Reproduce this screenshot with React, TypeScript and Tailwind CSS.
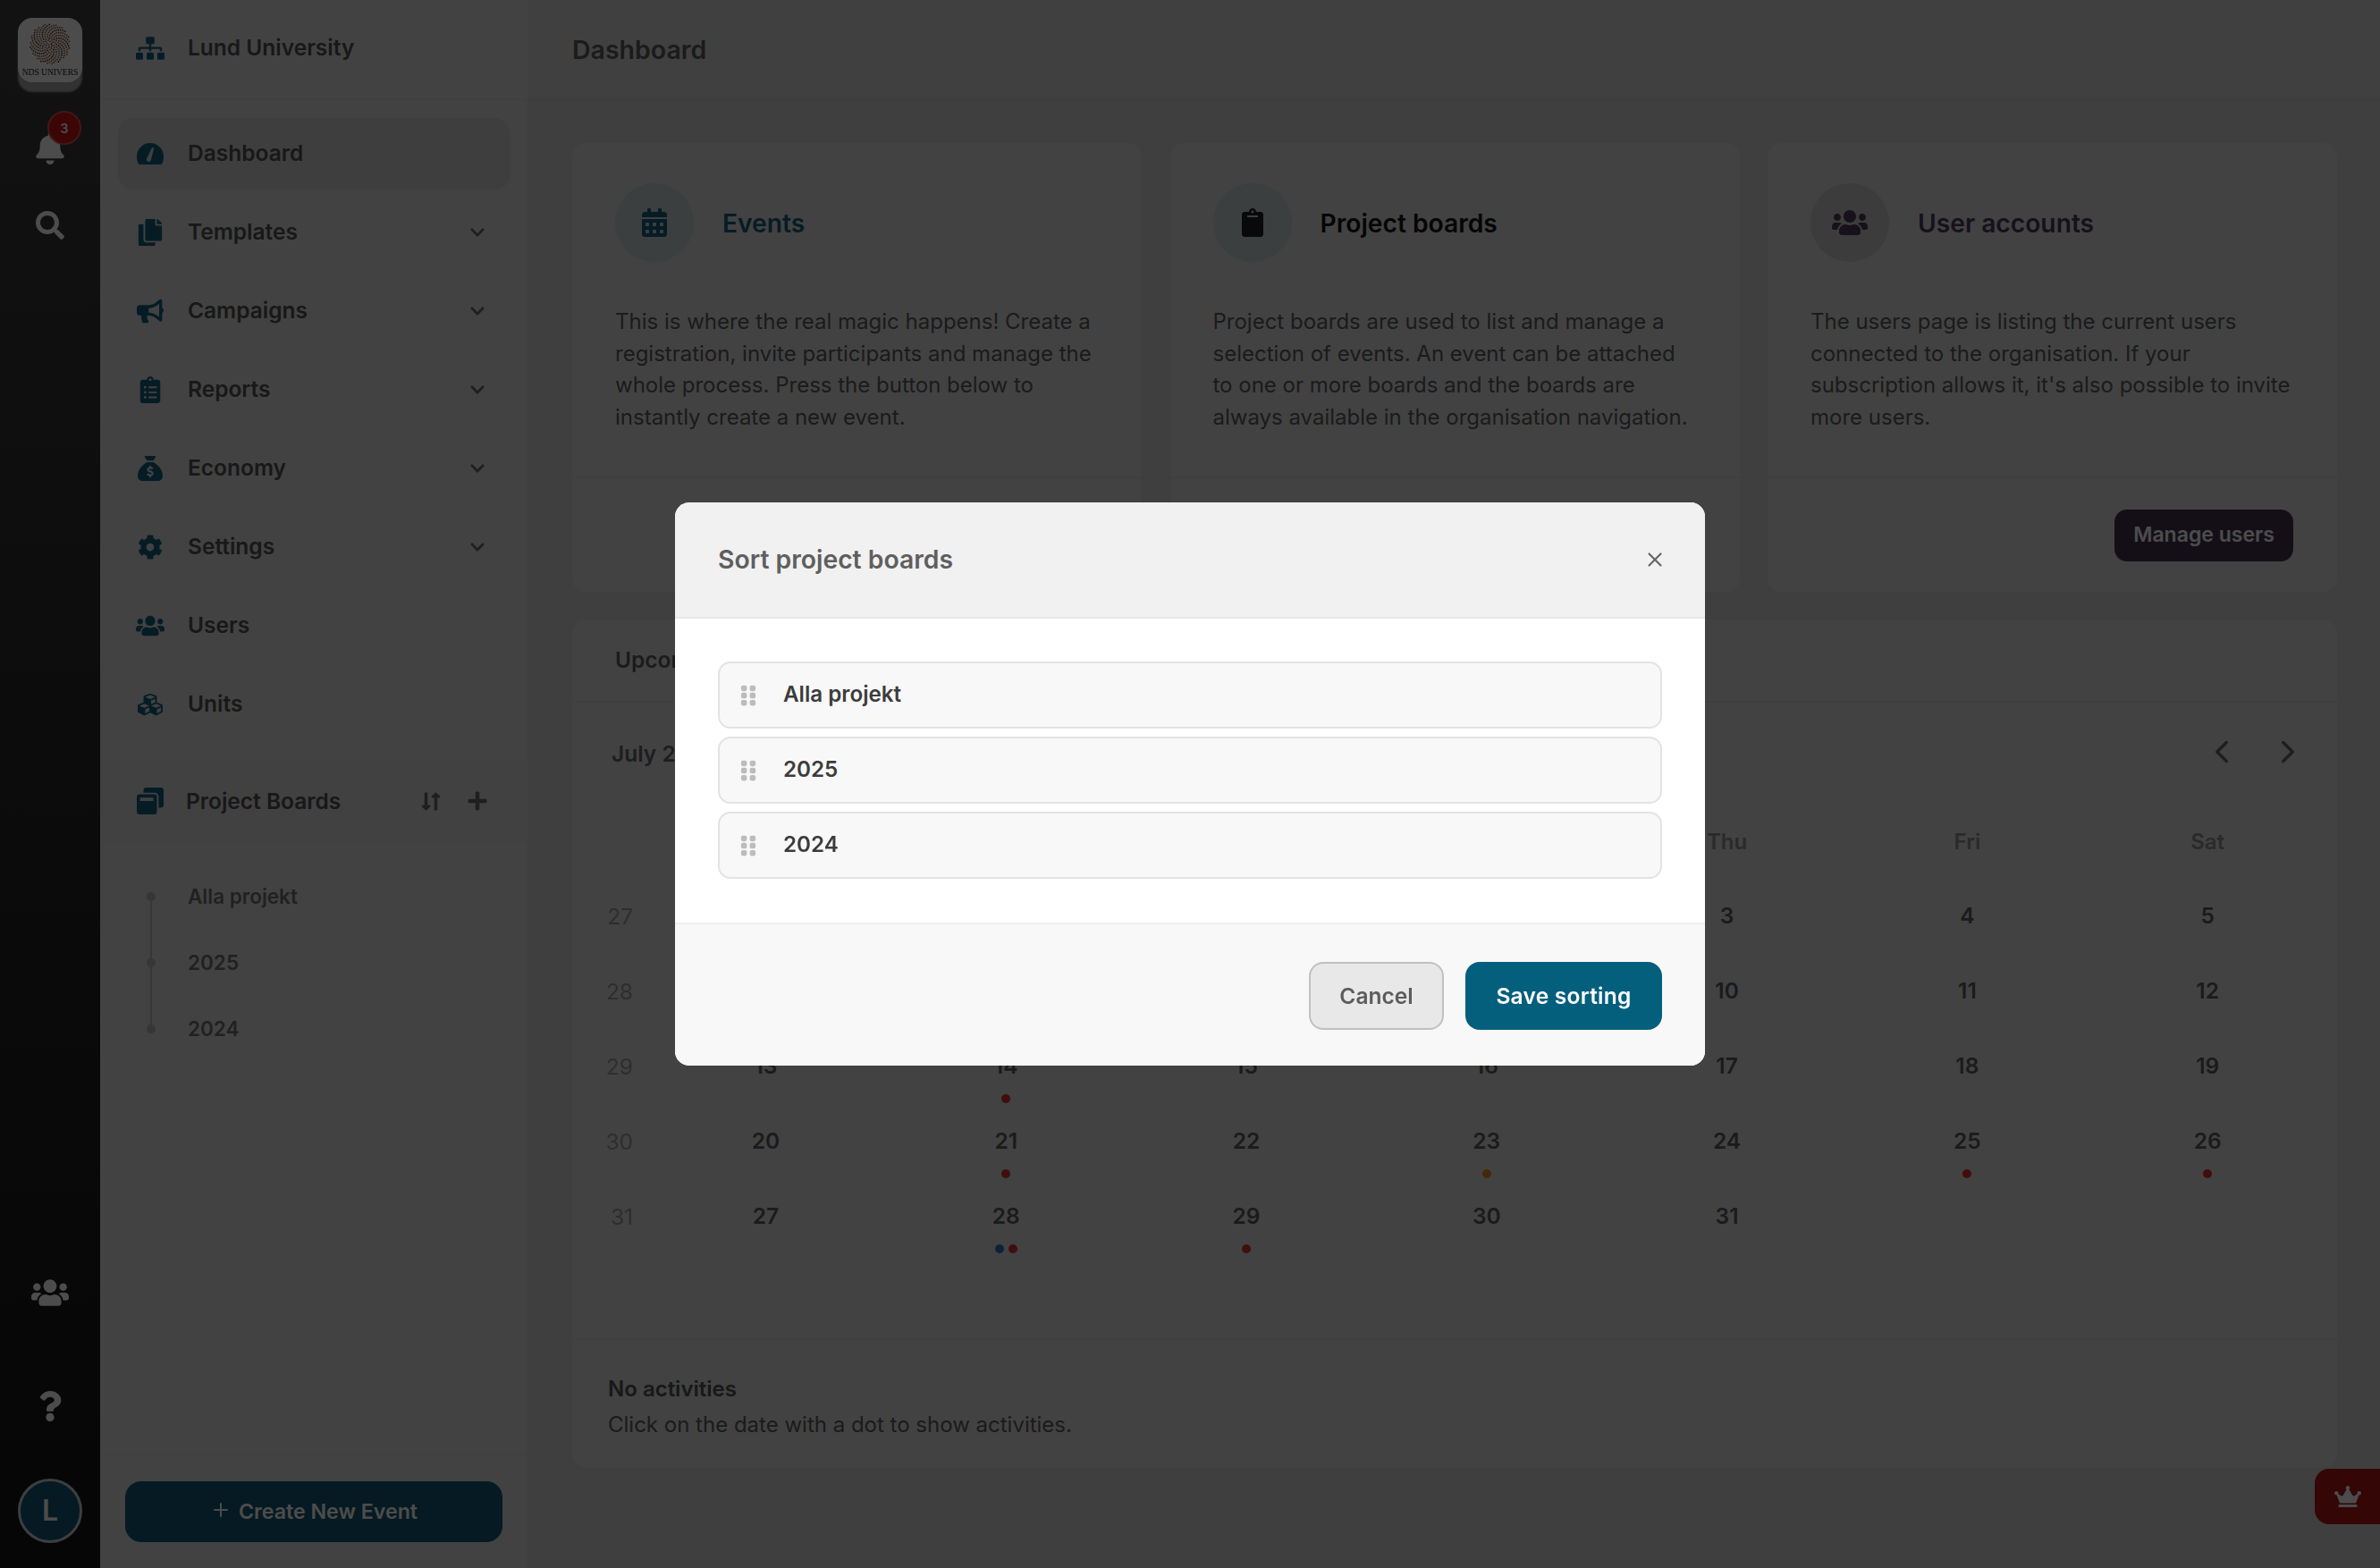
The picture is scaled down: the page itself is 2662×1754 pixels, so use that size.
import {ReactNode} from "react";
import {ChevronLeft, ChevronRight, Plus, X} from "lucide-react";
import {
  FaBell, FaBullhorn, FaCalendarAlt, FaChevronDown, FaClipboard, FaClipboardList, FaCog, FaCopy,
  FaCrown, FaCubes, FaLongArrowAltDown, FaLongArrowAltUp, FaPlus, FaQuestion, FaSearch, FaSitemap, FaUsers, FaWindowRestore,
} from "react-icons/fa";
import {FaGripVertical, FaSackDollar} from "react-icons/fa6";

function GaugeIcon() {
  return (
    <svg width="30" height="24" viewBox="0 0 30 24">
      <path d="M15 0a15 15 0 0 1 15 15c0 3-.5 5.500-1.500 7.500-.5 1-1.200 1.500-2.300 1.500H3.800c-1.100 0-1.800-.5-2.300-1.500C.5 20.500 0 18 0 15A15 15 0 0 1 15 0z" fill="currentColor" />
      <path d="M17 5l2.200.7-3.400 13.500a2.600 2.600 0 0 1-5-1.300z" fill="#d4d4d4" />
    </svg>
  );
}

const navItems = [
  {label: "Dashboard", icon: <GaugeIcon />, active: true},
  {label: "Templates", icon: <FaCopy size={30} />, more: true},
  {label: "Campaigns", icon: <FaBullhorn size={30} />, more: true},
  {label: "Reports", icon: <FaClipboardList size={30} />, more: true},
  {label: "Economy", icon: <FaSackDollar size={28} />, more: true},
  {label: "Settings", icon: <FaCog size={28} />, more: true},
  {label: "Users", icon: <FaUsers size={32} />},
  {label: "Units", icon: <FaCubes size={28} />},
];

const boards = ["Alla projekt", "2025", "2024"];

const weeks = [
  {week: 27, days: ["", "", "1", "2", "3", "4", "5"]},
  {week: 28, days: ["6", "7", "8", "9", "10", "11", "12"]},
  {week: 29, days: ["13", "14", "15", "16", "17", "18", "19"]},
  {week: 30, days: ["20", "21", "22", "23", "24", "25", "26"]},
  {week: 31, days: ["27", "28", "29", "30", "31", "", ""]},
];

const dots: Record<string, string[]> = {
  "14": ["bg-[#d92c2c]"],
  "21": ["bg-[#d92c2c]"],
  "23": ["bg-[#e08a1e]"],
  "25": ["bg-[#d92c2c]"],
  "26": ["bg-[#d92c2c]"],
  "28": ["bg-[#2c6fc0]", "bg-[#d92c2c]"],
  "29": ["bg-[#d92c2c]"],
};

// speckled seal of the logo
const sealDots = Array.from({length: 220}, (_, i) => {
  const angle = i * 2.399;
  const radius = 22.5 * Math.sqrt((i + 1) / 220);
  return {cx: 26 + radius * Math.cos(angle), cy: 24 + radius * Math.sin(angle), warm: i % 3 !== 0};
});

function Logo() {
  return (
    <div className="flex h-[72px] w-[72px] flex-col items-center rounded-[16px] bg-white shadow-[0_11px_2px_#a8a8a8]">
      <svg width="52" height="48" viewBox="0 0 52 48" className="mt-[5px] shrink-0">
        {sealDots.map((dot, i) => (
          <circle key={i} cx={dot.cx} cy={dot.cy} r="0.9" fill={dot.warm ? "#9a4e18" : "#35322f"} />
        ))}
      </svg>
      <span className="mt-[2px] whitespace-nowrap font-['Liberation_Serif',serif] text-[9.500px] leading-[12px] text-[#222]">
        NDS UNIVERS
      </span>
    </div>
  );
}

function Rail() {
  return (
    <aside className="flex h-full w-[112px] shrink-0 flex-col items-center bg-gradient-to-b from-[#3e3e3e] to-[#141414] pt-[20px] text-white">
      <Logo />
      <div className="relative mt-[56px]">
        <FaBell size={36} />
        <span className="absolute left-[15px] top-[-24px] flex h-[38px] w-[38px] items-center justify-center rounded-full border-2 border-[#d85050] bg-[#c81414] text-[14px] font-semibold">
          3
        </span>
      </div>
      <FaSearch size={32} className="mt-[52px]" />
      <FaUsers size={42} className="mt-auto" />
      <FaQuestion size={34} className="mt-[89px]" />
      <div className="mb-[28px] mt-[64px] flex h-[72px] w-[72px] items-center justify-center rounded-full border-[3px] border-[#c8d0d4] bg-[#115772] text-[32px] font-semibold">
        L
      </div>
    </aside>
  );
}

function Sidebar() {
  return (
    <aside className="flex h-full w-[478px] shrink-0 flex-col bg-[#dedede] text-[#505050]">
      <div className="flex h-[112px] shrink-0 items-center gap-[20px] border-b-2 border-[#d6d6d6] pb-[3px] pl-[34px] pr-5">
        <span className="flex w-[44px] justify-center text-[#155f7d]"><FaSitemap size={32} /></span>
        <span className="text-[24.500px] font-semibold">Lund University</span>
      </div>
      <nav className="flex flex-col gap-2 px-5 pt-5">
        {navItems.map((item) => (
          <div
            key={item.label}
            className={`flex h-[80px] items-center gap-[20px] rounded-[16px] pb-[1px] pl-[14px] pr-[27px] ${item.active ? "bg-[#d0d0d0]" : ""}`}
          >
            <span className="flex w-[44px] justify-center text-[#155f7d]">{item.icon}</span>
            <span className="text-[24.500px] font-semibold">{item.label}</span>
            {item.more && <FaChevronDown size={18} className="ml-auto text-[#6a6a6a]" />}
          </div>
        ))}
      </nav>
      <div className="mt-[21px] flex h-[94px] shrink-0 items-center bg-[#dadada] pl-[34px] pr-[44px]">
        <span className="flex w-[44px] justify-center text-[#155f7d]"><FaWindowRestore size={30} /></span>
        <span className="ml-[18px] text-[24.500px] font-semibold">Project Boards</span>
        <span className="ml-auto mr-[23px] flex text-[#6a6a6a]">
          <FaLongArrowAltDown size={23} className="mr-[-6px]" />
          <FaLongArrowAltUp size={23} className="ml-[-6px]" />
        </span>
        <FaPlus size={24} className="text-[#6a6a6a]" />
      </div>
      <div className="relative mt-[23px] flex flex-col">
        <span className="absolute bottom-[37px] left-[56px] top-[37px] w-[2px] bg-[#bdbdbd]" />
        {boards.map((board) => (
          <div key={board} className="relative flex h-[74px] items-center pl-[52px]">
            <span className="h-[10px] w-[10px] rounded-full bg-[#b4b4b4]" />
            <span className="ml-[36px] text-[22.500px] font-semibold text-[#6e6e6e]">{board}</span>
          </div>
        ))}
      </div>
      <div className="mt-auto border-t-2 border-[#d6d6d6] px-[28px] pb-[29px] pt-[29px]">
        <div className="flex h-[68px] items-center justify-center gap-[8px] rounded-[18px] bg-[#115772] text-[23.200px] font-semibold text-white">
          <Plus size={24} strokeWidth={2} className="mb-[4px]" />
          Create New Event
        </div>
      </div>
    </aside>
  );
}

function InfoCard({icon, title, titleClass, iconClass, children, footer}: {
  icon: ReactNode;
  title: string;
  titleClass: string;
  iconClass: string;
  children: ReactNode;
  footer?: ReactNode;
}) {
  return (
    <section className="flex h-[502px] flex-col rounded-[16px] bg-[#dedede]">
      <div className="h-[375px] border-b-2 border-[#d2d2d2] pl-[48px] pr-[46px] pt-[45px]">
        <div className="flex items-center gap-[32px]">
          <span className={`flex h-[88px] w-[88px] items-center justify-center rounded-full ${iconClass}`}>{icon}</span>
          <h2 className={`pt-[2px] text-[28.200px] font-semibold ${titleClass}`}>{title}</h2>
        </div>
        <p className="mt-[49px] text-[24px] leading-[35.700px] text-[#5a5a5a]">{children}</p>
      </div>
      <div className="flex flex-1 items-center justify-end px-[49px]">{footer}</div>
    </section>
  );
}

function Calendar() {
  return (
    <section className="mt-[31px] flex h-[949px] flex-col rounded-[16px] bg-[#dedede]">
      <div className="flex h-[93px] shrink-0 items-center border-b-2 border-[#d2d2d2] pl-[48px] text-[24.500px] font-semibold text-[#5c5c5c]">
        Upcoming events
      </div>
      <div className="flex h-[114px] shrink-0 items-center justify-between pl-[44px] pr-[34px]">
        <span className="text-[24.500px] font-semibold text-[#666]">July 2025</span>
        <div className="mb-[5px] flex gap-[32px] text-[#666]">
          <ChevronLeft size={42} strokeWidth={2} />
          <ChevronRight size={42} strokeWidth={2} />
        </div>
      </div>
      <div className="grid h-[80px] shrink-0 grid-cols-[82px_repeat(7,268.8px)] items-center pt-[3px] text-center text-[24px] font-semibold text-[#8d8d8d]">
        <span />
        {["Sun", "Mon", "Tue", "Wed", "Thu", "Fri", "Sat"].map((day) => <span key={day}>{day}</span>)}
      </div>
      <div className="mt-[19px] flex flex-col">
        {weeks.map(({week, days}) => (
          <div key={week} className="grid h-[84px] grid-cols-[82px_repeat(7,268.8px)] text-center">
            <span className="flex h-[53px] items-center justify-end pr-[14px] text-[24.500px] text-[#9a9a9a]">{week}</span>
            {days.map((day, i) => (
              <div key={i} className="flex flex-col items-center">
                <span className="flex h-[50px] items-center text-[24.500px] font-semibold text-[#5a5a5a]">{day}</span>
                <div className="mt-[7px] flex gap-[5px]">
                  {(dots[day] ?? []).map((color, j) => <span key={j} className={`h-[10px] w-[10px] rounded-full ${color}`} />)}
                </div>
              </div>
            ))}
          </div>
        ))}
      </div>
      <div className="mt-auto h-[145px] border-t-2 border-[#d2d2d2] pl-[40px] pt-[35px] text-[24px] leading-[40px]">
        <p className="font-semibold text-[#505050]">No activities</p>
        <p className="text-[#5a5a5a]">Click on the date with a dot to show activities.</p>
      </div>
    </section>
  );
}

function SortModal() {
  return (
    <div className="fixed inset-0 flex items-center justify-center bg-black/70">
      <div className="flex h-[630px] w-[1152px] flex-col overflow-hidden rounded-[16px] bg-white">
        <header className="flex h-[130px] shrink-0 items-center justify-between border-b-2 border-[#e8e8e8] bg-[#f1f1f1] pl-[48px] pr-[43px]">
          <h3 className="text-[28.300px] font-semibold text-[#5f5f5f]">Sort project boards</h3>
          <X size={26} strokeWidth={2} className="text-[#666]" />
        </header>
        <div className="flex flex-1 flex-col gap-[9px] px-[48px] pt-[48px]">
          {boards.map((board) => (
            <div key={board} className="flex h-[75px] items-center rounded-[14px] border-2 border-[#e3e3e3] bg-[#f8f8f8] pl-[19px]">
              <FaGripVertical size={26} className="text-[#bcbcbc]" />
              <span className="ml-[26px] text-[24.200px] font-semibold text-[#3c3c3c]">{board}</span>
            </div>
          ))}
        </div>
        <footer className="flex h-[160px] shrink-0 items-center justify-end gap-[24px] border-t-2 border-[#eeeeee] bg-[#f8f8f8] pr-[48px] pt-[2px]">
          <button className="h-[76px] w-[151px] rounded-[16px] border-2 border-[#c0c0c0] bg-[#e8e8e8] text-[24.500px] font-semibold text-[#5c5c5c]">
            Cancel
          </button>
          <button className="h-[76px] w-[220px] rounded-[16px] bg-[#045f7d] text-[24.500px] font-semibold tracking-[0.25px] text-white">
            Save sorting
          </button>
        </footer>
      </div>
    </div>
  );
}

export default function App() {
  return (
    <div className="relative flex h-screen overflow-hidden bg-[#d4d4d4] font-['Inter',sans-serif]">
      <Rail />
      <Sidebar />
      <main className="flex min-w-0 flex-1 flex-col">
        <div className="flex h-[112px] shrink-0 items-center border-b-2 border-[#d0d0d0] bg-[#d8d8d8] pl-[50px] pt-[2px] text-[28.500px] font-semibold text-[#5c5c5c]">
          Dashboard
        </div>
        <div className="pl-[50px] pr-[48px] pt-[48px]">
          <div className="grid grid-cols-3 gap-[31.5px]">
            <InfoCard
              icon={<FaCalendarAlt size={32} className="text-[#155f7d]" />}
              iconClass="bg-[#c6d2d2]"
              title="Events"
              titleClass="text-[#155f7d]"
            >
              This is where the real magic happens! Create a registration, invite participants and manage the whole process. Press the button below to instantly create a new event.
            </InfoCard>
            <InfoCard
              icon={<FaClipboard size={32} className="text-[#1f1f1f]" />}
              iconClass="bg-[#c6d2d2]"
              title="Project boards"
              titleClass="text-[#111]"
            >
              Project boards are used to list and manage a selection of events. An event can be attached to one or more boards and the boards are always available in the organisation navigation.
            </InfoCard>
            <InfoCard
              icon={<FaUsers size={40} className="text-[#4a3a58]" />}
              iconClass="bg-[#c8c8c8]"
              title="User accounts"
              titleClass="text-[#4a3a58]"
              footer={
                <button className="h-[58px] w-[200px] rounded-[14px] bg-[#43334f] text-[23px] font-semibold text-white">
                  Manage users
                </button>
              }
            >
              The users page is listing the current users connected to the organisation. If your subscription allows it, it's also possible to invite more users.
            </InfoCard>
          </div>
          <Calendar />
        </div>
      </main>
      <div className="absolute right-0 top-[1643px] flex h-[62px] w-[73px] items-center justify-center rounded-l-[16px] bg-[#b01414] text-white">
        <FaCrown size={30} />
      </div>
      <SortModal />
    </div>
  );
}
